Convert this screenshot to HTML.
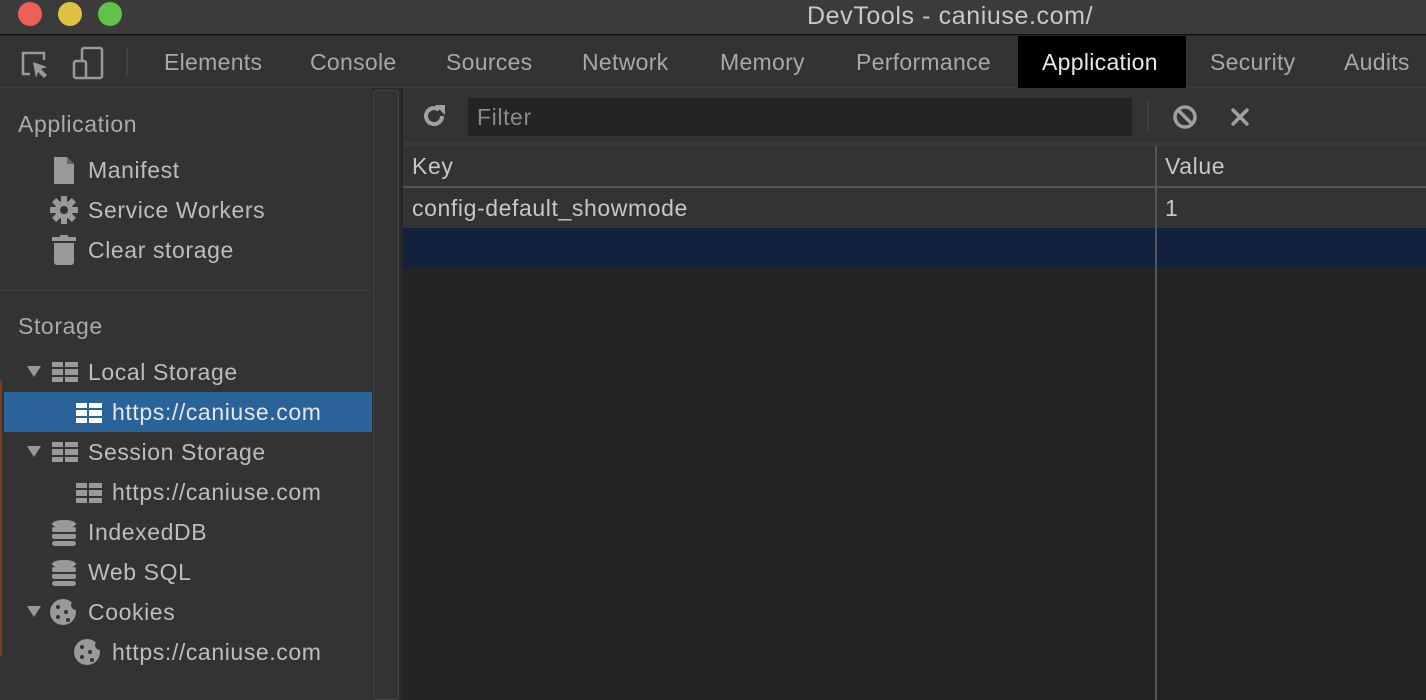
<!DOCTYPE html>
<html><head><style>
*{margin:0;padding:0;box-sizing:border-box}
body{width:1426px;height:700px;overflow:hidden;background:#242424;font-family:"Liberation Sans",sans-serif;position:relative}
.abs{position:absolute}
.title{left:0;top:0;width:1426px;height:35px;background:#3b3b3b;border-bottom:1px solid #111}
.dot{width:24px;height:24px;border-radius:50%;top:2px}
.tabs{left:0;top:36px;width:1426px;height:52px;background:#333;border-bottom:1px solid #3d3d3d}
.tab{top:0;height:52px;line-height:52px;font-size:23px;letter-spacing:0.3px;color:#a8a8a8}
.side{left:0;top:88px;width:372px;height:612px;background:#333}
.st{font-size:23px;letter-spacing:0.6px;color:#bdbdbd;left:0;height:40px;line-height:40px;width:372px}
.scroll{left:372px;top:88px;width:30px;height:612px;background:#2a2a2a}
.scroll div{position:absolute;left:1px;top:2px;width:26px;height:610px;background:#333;border:1px solid #444;border-radius:3px}
.main{left:403px;top:88px;width:1023px;height:612px;background:#242424}
.cell{font-size:23px;letter-spacing:0.6px;color:#c4c8cc;line-height:40px}
</style></head><body>
<div class="abs title"></div>
<div class="abs dot" style="left:18px;background:#ee5f57"></div>
<div class="abs dot" style="left:58px;background:#e2c043"></div>
<div class="abs dot" style="left:98px;background:#61c148"></div>
<div class="abs" style="left:807px;top:0;font-size:25px;letter-spacing:0.6px;line-height:32px;color:#c8c8c8;white-space:nowrap">DevTools - caniuse.com/</div>

<div class="abs tabs">
<svg class="abs" style="left:20px;top:14px" width="32" height="32" viewBox="0 0 32 32"><path d="M10 24H3V3h21v7" fill="none" stroke="#9a9a9a" stroke-width="2.5"/><path d="M13 12l14 5-6 2 6 6-3 3-6-6-2 6z" fill="#9a9a9a"/></svg>
<svg class="abs" style="left:72px;top:10px" width="34" height="36" viewBox="0 0 34 36"><rect x="10" y="2" width="20" height="30" rx="2" fill="none" stroke="#9a9a9a" stroke-width="2.5"/><rect x="2" y="15" width="12" height="17" rx="2" fill="#333" stroke="#9a9a9a" stroke-width="2.5"/></svg>
<div class="abs" style="left:126px;top:12px;width:2px;height:28px;background:#444"></div>
<div class="abs tab" style="left:164px">Elements</div>
<div class="abs tab" style="left:310px">Console</div>
<div class="abs tab" style="left:446px">Sources</div>
<div class="abs tab" style="left:582px">Network</div>
<div class="abs tab" style="left:720px">Memory</div>
<div class="abs tab" style="left:856px">Performance</div>
<div class="abs" style="left:1018px;top:0;width:168px;height:52px;background:#000"></div>
<div class="abs tab" style="left:1042px;color:#e8e8e8">Application</div>
<div class="abs tab" style="left:1210px">Security</div>
<div class="abs tab" style="left:1344px">Audits</div>
</div>

<div class="abs side">
<div class="abs st" style="top:16px;padding-left:18px;color:#aaa">Application</div>
<div class="abs st" style="top:62px;padding-left:88px">Manifest</div>
<svg class="abs" style="left:53px;top:69px" width="22" height="27" viewBox="0 0 22 27"><path d="M1 0h13l7 7v20H1z" fill="#999"/><path d="M14 0v7h7" fill="#666"/></svg>
<div class="abs st" style="top:102px;padding-left:88px">Service Workers</div>
<svg class="abs" style="left:50px;top:108px" width="28" height="28" viewBox="0 0 28 28"><g fill="#999"><circle cx="14" cy="14" r="9"/><rect x="11" y="0" width="6" height="28"/><rect x="0" y="11" width="28" height="6"/><rect x="11" y="0" width="6" height="28" transform="rotate(45 14 14)"/><rect x="11" y="0" width="6" height="28" transform="rotate(-45 14 14)"/></g><circle cx="14" cy="14" r="4" fill="#333"/></svg>
<div class="abs st" style="top:142px;padding-left:88px">Clear storage</div>
<svg class="abs" style="left:52px;top:147px" width="24" height="30" viewBox="0 0 24 30"><rect x="0" y="2" width="24" height="4" fill="#999"/><rect x="8" y="0" width="8" height="3" fill="#999"/><path d="M2 8h20v19a3 3 0 0 1-3 3H5a3 3 0 0 1-3-3z" fill="#999"/></svg>
<div class="abs" style="left:0;top:202px;width:372px;height:1px;background:#3f3f3f"></div>
<div class="abs st" style="top:218px;padding-left:18px;color:#aaa">Storage</div>

<div class="abs st" style="top:264px;padding-left:88px">Local Storage</div>
<div class="abs st" style="top:304px;background:#2a639a;color:#e6e6e6;left:4px;width:368px;padding-left:108px">https://caniuse.com</div>
<div class="abs st" style="top:344px;padding-left:88px">Session Storage</div>
<div class="abs st" style="top:384px;padding-left:112px">https://caniuse.com</div>
<div class="abs st" style="top:424px;padding-left:88px">IndexedDB</div>
<div class="abs st" style="top:464px;padding-left:88px">Web SQL</div>
<div class="abs st" style="top:504px;padding-left:88px">Cookies</div>
<div class="abs st" style="top:544px;padding-left:112px">https://caniuse.com</div>

<svg class="abs" style="left:0;top:-88px" width="372" height="700">
<g fill="#999">
<path d="M27 366h14l-7 11z"/><path d="M27 446h14l-7 11z"/><path d="M27 606h14l-7 11z"/>
</g>
<g fill="#999">
<rect x="52" y="362" width="11" height="5"/><rect x="65" y="362" width="13" height="5"/>
<rect x="52" y="369" width="11" height="6"/><rect x="65" y="369" width="13" height="6"/>
<rect x="52" y="377" width="11" height="5"/><rect x="65" y="377" width="13" height="5"/>
</g>
<g fill="#fff">
<rect x="76" y="403" width="11" height="5"/><rect x="89" y="403" width="13" height="5"/>
<rect x="76" y="410" width="11" height="6"/><rect x="89" y="410" width="13" height="6"/>
<rect x="76" y="418" width="11" height="5"/><rect x="89" y="418" width="13" height="5"/>
</g>
<g fill="#999">
<rect x="52" y="442" width="11" height="5"/><rect x="65" y="442" width="13" height="5"/>
<rect x="52" y="449" width="11" height="6"/><rect x="65" y="449" width="13" height="6"/>
<rect x="52" y="457" width="11" height="5"/><rect x="65" y="457" width="13" height="5"/>
<rect x="76" y="483" width="11" height="5"/><rect x="89" y="483" width="13" height="5"/>
<rect x="76" y="490" width="11" height="6"/><rect x="89" y="490" width="13" height="6"/>
<rect x="76" y="498" width="11" height="5"/><rect x="89" y="498" width="13" height="5"/>
</g>
<g fill="#999">
<ellipse cx="64" cy="524" rx="12" ry="4"/><rect x="52" y="527" width="24" height="5" rx="2"/><rect x="52" y="534" width="24" height="5" rx="2"/><rect x="52" y="541" width="24" height="5" rx="3"/>
<ellipse cx="64" cy="564" rx="12" ry="4"/><rect x="52" y="567" width="24" height="5" rx="2"/><rect x="52" y="574" width="24" height="5" rx="2"/><rect x="52" y="581" width="24" height="5" rx="3"/>
</g>
<g fill="#999"><circle cx="63" cy="612" r="13"/><circle cx="87" cy="652" r="13"/></g>
<g fill="#333"><circle cx="76" cy="605" r="5"/><circle cx="100" cy="645" r="5"/>
<circle cx="58" cy="607" r="2"/><circle cx="66" cy="612" r="2"/><circle cx="58" cy="617" r="2"/><circle cx="68" cy="620" r="2"/>
<circle cx="82" cy="647" r="2"/><circle cx="90" cy="652" r="2"/><circle cx="82" cy="657" r="2"/><circle cx="92" cy="660" r="2"/></g>
</svg>
</div>
<div class="abs" style="left:0;top:380px;width:2px;height:276px;background:#7a3a20"></div>

<div class="abs scroll"><div></div></div>

<div class="abs main">
<div class="abs" style="left:0;top:0;width:1023px;height:54px;background:#333"></div>
<svg class="abs" style="left:18px;top:15px" width="26" height="26" viewBox="0 0 26 26"><path d="M21 13a8 8 0 1 1-3-6.2" fill="none" stroke="#a0a0a0" stroke-width="4"/><path d="M14 2h10v10z" fill="#a0a0a0"/></svg>
<div class="abs" style="left:65px;top:10px;width:664px;height:38px;background:#242424"></div>
<div class="abs cell" style="left:74px;top:10px;line-height:38px;color:#8a8a8a">Filter</div>
<div class="abs" style="left:744px;top:12px;width:2px;height:32px;background:#3e3e3e"></div>
<svg class="abs" style="left:769px;top:16px" width="26" height="26" viewBox="0 0 26 26"><circle cx="13" cy="13" r="10" fill="none" stroke="#a0a0a0" stroke-width="3.5"/><path d="M6 6l14 14" stroke="#a0a0a0" stroke-width="3.5"/></svg>
<svg class="abs" style="left:827px;top:19px" width="20" height="20" viewBox="0 0 20 20"><path d="M2 2l16 16M18 2L2 18" stroke="#a0a0a0" stroke-width="3.5"/></svg>
<div class="abs" style="left:0;top:54px;width:1023px;height:4px;background:#3a3a3a"></div>
<div class="abs" style="left:0;top:58px;width:1023px;height:40px;background:#333"></div>
<div class="abs" style="left:0;top:98px;width:1023px;height:2px;background:#555"></div>
<div class="abs" style="left:0;top:100px;width:1023px;height:40px;background:#333"></div>
<div class="abs" style="left:0;top:140px;width:1023px;height:40px;background:#12213f"></div>
<div class="abs" style="left:752px;top:58px;width:2px;height:554px;background:#555"></div>
<div class="abs cell" style="left:9px;top:58px">Key</div>
<div class="abs cell" style="left:762px;top:58px">Value</div>
<div class="abs cell" style="left:9px;top:100px">config-default_showmode</div>
<div class="abs cell" style="left:762px;top:100px">1</div>
</div>
</body></html>
